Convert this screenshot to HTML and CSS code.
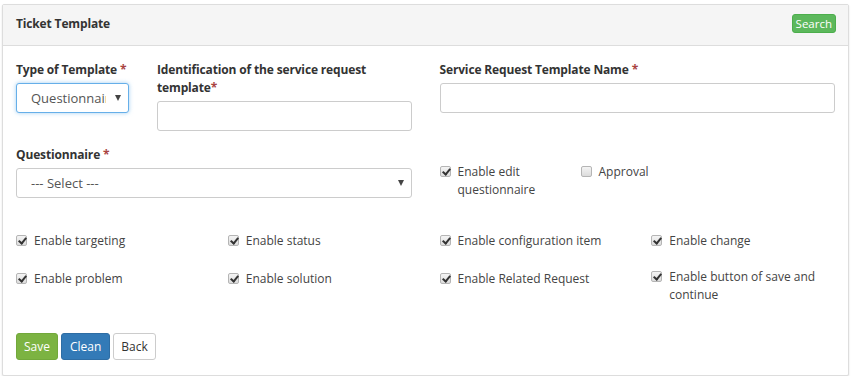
FILE: index.html
```html
<!DOCTYPE html>
<html lang="en">
<head>
    <meta charset="UTF-8">
    <title>Ticket Template</title>
    <link rel="stylesheet" href="styles.css">
</head>
<body>

<div class="panel">
    <div class="panel-heading">
        <span class="panel-title">Ticket Template</span>
        <button class="btn-search">Search</button>
    </div>

    <div class="panel-body">
        <div class="row-top">
            <div class="half split">
                <div class="field">
                    <label class="nowrap">Type of Template <span class="req">*</span></label>
                    <div class="select-wrap">
                        <select class="control focused">
                            <option>Questionnaire</option>
                        </select>
                    </div>
                </div>
                <div class="field">
                    <label>Identification of the service request template<span class="req">*</span></label>
                    <input type="text" class="control">
                </div>
            </div>
            <div class="half">
                <div class="field">
                    <label>Service Request Template Name <span class="req">*</span></label>
                    <input type="text" class="control">
                </div>
            </div>
        </div>

        <div class="row-mid">
            <div class="half">
                <div class="field">
                    <label>Questionnaire <span class="req">*</span></label>
                    <div class="select-wrap">
                        <select class="control">
                            <option>--- Select ---</option>
                        </select>
                    </div>
                </div>
            </div>
            <div class="half options">
                <label class="check edit"><input type="checkbox" checked> <span>Enable edit questionnaire</span></label>
                <label class="check"><input type="checkbox"> <span>Approval</span></label>
            </div>
        </div>

        <div class="checks">
            <label class="check"><input type="checkbox" checked> <span>Enable targeting</span></label>
            <label class="check"><input type="checkbox" checked> <span>Enable status</span></label>
            <label class="check"><input type="checkbox" checked> <span>Enable configuration item</span></label>
            <label class="check"><input type="checkbox" checked> <span>Enable change</span></label>
            <label class="check"><input type="checkbox" checked> <span>Enable problem</span></label>
            <label class="check"><input type="checkbox" checked> <span>Enable solution</span></label>
            <label class="check"><input type="checkbox" checked> <span>Enable Related Request</span></label>
            <label class="check raised"><input type="checkbox" checked> <span>Enable button of save and continue</span></label>
        </div>

        <div class="actions">
            <button class="btn btn-save">Save</button>
            <button class="btn btn-clean">Clean</button>
            <button class="btn btn-back">Back</button>
        </div>
    </div>
</div>

</body>
</html>
```

FILE: styles.css
```css
body {
    font-family: "Open Sans", Arial, sans-serif;
    font-size: 12px;
    line-height: 18px;
    color: #333;
    background-color: #fff;
    margin: 0;
    padding: 4px 5px 0 2px;
}
.panel {
    border: 1px solid #ddd;
    border-radius: 2px;
    box-shadow: 0 1px 2px rgba(0, 0, 0, 0.12);
    background: #fff;
}
.panel-heading {
    display: flex;
    align-items: center;
    justify-content: space-between;
    height: 40px;
    padding: 0 12px 0 13px;
    background-color: #f5f5f5;
    border-bottom: 1px solid #ddd;
}
.panel-title {
    font-weight: bold;
    color: #333;
    letter-spacing: -0.15px;
    margin-top: -2px;
}
.btn-search {
    font-family: inherit;
    font-size: 11.5px;
    color: #fff;
    background-color: #5cb85c;
    border: 1px solid #4cae4c;
    border-radius: 3px;
    height: 19px;
    padding: 0 3px;
    line-height: 16px;
    margin-top: -3px;
}
.panel-body {
    padding: 15px 13px 15px 13px;
}
.row-top, .row-mid {
    display: grid;
    grid-template-columns: 1fr 1fr;
    column-gap: 28px;
}
.row-top {
    margin-bottom: 15px;
}
.half.split {
    display: grid;
    grid-template-columns: 113px 1fr;
    column-gap: 28px;
}
.field label {
    display: block;
    font-weight: bold;
    letter-spacing: -0.15px;
    margin-bottom: 4px;
}
.field label.nowrap {
    white-space: nowrap;
}
.req {
    color: #a94442;
}
.control {
    display: block;
    width: 100%;
    box-sizing: border-box;
    height: 30px;
    font-family: inherit;
    font-size: 13px;
    color: #555;
    background: #fff;
    border: 1px solid #ccc;
    border-radius: 3px;
    padding: 0 22px 0 14px;
    outline: none;
}
select.control {
    appearance: none;
    -webkit-appearance: none;
}
.control.focused {
    border-color: #66afe9;
    box-shadow: 0 0 4px rgba(102, 175, 233, 0.6);
}
.select-wrap {
    position: relative;
}
.select-wrap::after {
    content: "";
    position: absolute;
    right: 8px;
    top: 12px;
    border-left: 3px solid transparent;
    border-right: 3px solid transparent;
    border-top: 6px solid #444;
    pointer-events: none;
}
.options {
    display: flex;
    align-items: flex-start;
    padding-top: 17px;
}
.check {
    display: flex;
    align-items: flex-start;
    gap: 7px;
    color: #444;
}
.check.edit {
    width: 120px;
    margin-right: 21px;
}
.check input {
    appearance: none;
    -webkit-appearance: none;
    flex: none;
    width: 11px;
    height: 11px;
    margin: 3px 0 0 0;
    border: 1px solid #b5b5b5;
    border-radius: 2px;
    background: linear-gradient(#f4f4f4, #dcdcdc);
    position: relative;
}
.check input:checked::after {
    content: "";
    position: absolute;
    left: 3px;
    top: 0px;
    width: 3px;
    height: 6px;
    border-right: 2px solid #333;
    border-bottom: 2px solid #333;
    transform: rotate(40deg);
}
.checks {
    display: grid;
    grid-template-columns: repeat(4, 1fr);
    column-gap: 28px;
    row-gap: 20px;
    margin-top: 33px;
}
.check.raised {
    margin-top: -2px;
    margin-bottom: 2px;
}
.actions {
    display: flex;
    gap: 3px;
    margin-top: 27px;
}
.btn {
    font-family: inherit;
    font-size: 12px;
    height: 27px;
    padding: 0 7px;
    border-radius: 3px;
    border: 1px solid transparent;
    cursor: pointer;
}
.btn-save {
    background-color: #7cb342;
    border-color: #72a83b;
    color: #fff;
}
.btn-clean {
    background-color: #337ab7;
    border-color: #2e6da4;
    color: #fff;
    padding: 0 8px;
}
.btn-back {
    background-color: #fff;
    border-color: #ccc;
    color: #333;
    padding: 0 7px;
}
```
